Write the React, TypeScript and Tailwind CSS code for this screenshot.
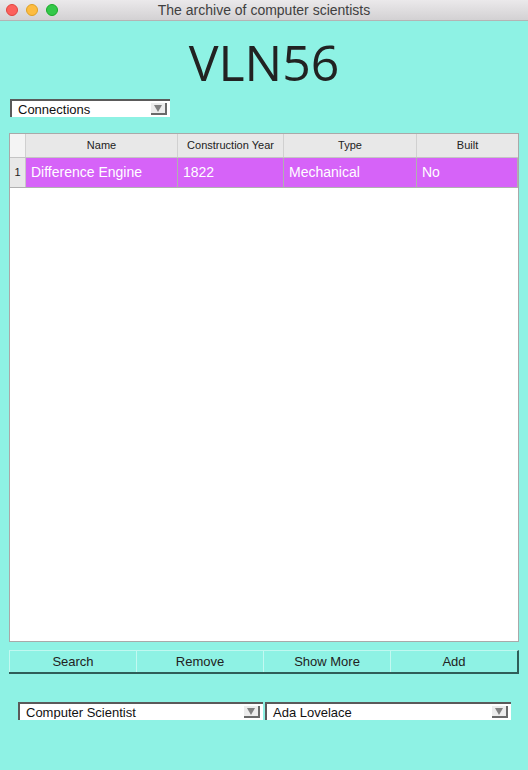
import React from 'react'

const font = { fontFamily: '"Liberation Sans", Arial, sans-serif' }

function Combo({ label, className }: { label: string; className: string }) {
  return (
    <div
      className={`flex h-[18px] items-center border-l-2 border-t-2 border-[#5a5a5a] bg-white pr-[3px] ${className}`}
    >
      <span className="flex-1 truncate pl-[6px] text-[13px] leading-none text-[#111]">{label}</span>
      <div className="flex h-[12px] w-[16px] items-end justify-center border-b-2 border-r-2 border-[#6a6a6a] bg-[#ececec]">
        <svg width="10" height="9" viewBox="0 0 10 9">
          <polygon points="1,1 9,1 5,8" fill="#808080" />
        </svg>
      </div>
    </div>
  )
}

const columns = [
  { title: 'Name', w: 'w-[152px]' },
  { title: 'Construction Year', w: 'w-[106px]' },
  { title: 'Type', w: 'w-[133px]' },
  { title: 'Built', w: 'flex-1' }
]

const row = ['Difference Engine', '1822', 'Mechanical', 'No']

export default function App() {
  return (
    <div className="flex h-[770px] w-[528px] flex-col bg-[#8ef2e4]" style={font}>
      <div className="relative flex h-[21px] items-center justify-center border-b border-[#b4b4b4] bg-gradient-to-b from-[#ebe9eb] to-[#d3d1d3]">
        <div className="absolute left-[6px] top-[4px] flex gap-[8px]">
          <span className="h-[12px] w-[12px] rounded-full border border-[#e0443e] bg-[#fc605c]" />
          <span className="h-[12px] w-[12px] rounded-full border border-[#dea123] bg-[#fdbc40]" />
          <span className="h-[12px] w-[12px] rounded-full border border-[#1aab29] bg-[#34c84a]" />
        </div>
        <span className="pt-[1px] text-[14px] text-[#404040]">The archive of computer scientists</span>
      </div>

      <div
        className="mt-[11px] flex h-[60px] items-center justify-center text-[50px] leading-none text-[#222]"
        style={{ fontFamily: '"Open Sans", "DejaVu Sans", sans-serif' }}
      >
        VLN56
      </div>

      <div className="ml-[10px] mt-[7px]">
        <Combo label="Connections" className="w-[160px]" />
      </div>

      <div className="ml-[9px] mt-[16px] flex h-[509px] w-[510px] flex-col border border-[#a9a9a9] bg-white">
        <div className="flex h-[24px] border-b border-[#c4c4c4] bg-[#e8e8e8]">
          <div className="w-[16px] border-r border-[#d0d0d0] bg-[#f4f4f4]" />
          {columns.map((c) => (
            <div
              key={c.title}
              className={`${c.w} flex items-center justify-center border-r border-[#d0d0d0] text-[11px] text-[#222] last:border-r-0`}
            >
              {c.title}
            </div>
          ))}
        </div>
        <div className="flex h-[30px] border-b border-[#b0b0b0]">
          <div className="flex w-[16px] items-center justify-center border-r border-[#c8c8c8] bg-[#e8e8e8] text-[11px] text-[#222]">
            1
          </div>
          {columns.map((c, i) => (
            <div
              key={c.title}
              className={`${c.w} flex items-center border-r border-[#b0b0b0] bg-[#d663f8] pl-[5px] text-[14px] text-white`}
            >
              {row[i]}
            </div>
          ))}
        </div>
      </div>

      <div className="ml-[9px] mt-[8px] flex h-[24px] w-[510px] border-b-2 border-r-2 border-t border-b-[#2e5e58] border-r-[#2e5e58] border-t-[#bff8f0]">
        {['Search', 'Remove', 'Show More', 'Add'].map((b) => (
          <div
            key={b}
            className="flex flex-1 items-center justify-center border-l border-[#c2f9f1] text-[13px] text-[#222]"
          >
            {b}
          </div>
        ))}
      </div>

      <div className="ml-[18px] mt-[28px] flex gap-[2px]">
        <Combo label="Computer Scientist" className="w-[245px]" />
        <Combo label="Ada Lovelace" className="w-[246px]" />
      </div>
    </div>
  )
}
